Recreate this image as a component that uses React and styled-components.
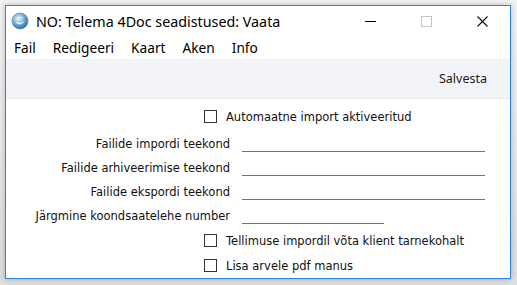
import styled, { createGlobalStyle } from 'styled-components'

const Global = createGlobalStyle`
  html, body { margin:0; padding:0; }
  body {
    background:#e9e9e9;
    width:517px;
    height:285px;
    overflow:hidden;
  }
`

const Shell = styled.div`
  padding:5px 6px 6px 5px;
  height:285px;
  box-sizing:border-box;
  background:linear-gradient(#f4f4f4,#dedede);
`
const Win = styled.div`
  height:100%;
  box-sizing:border-box;
  border:1px solid #2b87de;
  background:#fff;
  display:flex;
  flex-direction:column;
  box-shadow:0 0 6px rgba(0,0,0,0.25);
`
const TitleBar = styled.div`
  height:30px;
  display:flex;
  align-items:center;
  padding-left:5px;
  font-family:"Noto Sans","Open Sans",sans-serif;
  font-size:14.3px;
  color:#000;
`
const Title = styled.span`
  margin-left:7px;
  flex:1;
`
const WinBtn = styled.div`
  width:56px;
  height:29px;
  display:flex;
  align-items:center;
  justify-content:center;
`
const MenuBar = styled.div`
  height:23px;
  display:flex;
  align-items:center;
  padding-left:8px;
  gap:17px;
  font-family:"Noto Sans","Open Sans",sans-serif;
  font-size:13.7px;
  color:#000;
`
const MenuItem = styled.span``

const Toolbar = styled.div`
  height:39px;
  background:#f3f4f7;
  border-bottom:1px solid #e8e8ec;
  display:flex;
  align-items:center;
  justify-content:flex-end;
  padding-right:23px;
  font-family:"Noto Sans","Open Sans",sans-serif;
  font-size:12.5px;
  color:#1a1a1a;
`
const Form = styled.div`
  flex:1;
  padding-top:5px;
  display:flex;
  flex-direction:column;
  font-family:"DejaVu Sans",Verdana,sans-serif;
  font-size:11.5px;
  color:#111;
`
const CheckRow = styled.div`
  height:25px;
  display:flex;
  align-items:center;
  padding-left:198px;
  gap:9px;
  margin-bottom:${p => p.mb || 0}px;
`
const Box = styled.span`
  width:11px;
  height:11px;
  border:1px solid #333;
  background:#fff;
  display:inline-block;
`
const FieldRow = styled.div`
  height:24px;
  display:flex;
  align-items:center;
`
const Label = styled.div`
  width:224px;
  text-align:right;
`
const Line = styled.div`
  margin-left:12px;
  width:${p => p.w}px;
  height:15px;
  border-bottom:1px solid #707070;
`

const AppIcon = () => (
  <svg width="18" height="18" viewBox="0 0 18 18">
    <defs>
      <radialGradient id="g" cx="40%" cy="35%" r="65%">
        <stop offset="0" stopColor="#e8f4fc" />
        <stop offset="0.6" stopColor="#6aa9d6" />
        <stop offset="1" stopColor="#2c6ea6" />
      </radialGradient>
    </defs>
    <circle cx="9" cy="9" r="8" fill="url(#g)" stroke="#6d8aa3" strokeWidth="0.8" />
    <path d="M4.5 9.5 C6 13 11 13.5 13.5 9 C11.5 11 7.5 11.5 4.5 9.5Z" fill="#fff" opacity="0.9" />
    <path d="M6 6 C8 4.5 11 4.8 12.5 6.5 C10.5 5.8 8 6 6 6Z" fill="#fff" opacity="0.8" />
  </svg>
)

const fields = [
  { label: 'Failide impordi teekond', w: 243 },
  { label: 'Failide arhiveerimise teekond', w: 243 },
  { label: 'Failide ekspordi teekond', w: 243 },
  { label: 'Järgmine koondsaatelehe number', w: 142 },
]

const App = () => (
  <>
    <Global />
    <Shell>
      <Win>
        <TitleBar>
          <AppIcon />
          <Title>NO: Telema 4Doc seadistused: Vaata</Title>
          <WinBtn>
            <svg width="11" height="11" viewBox="0 0 11 11"><path d="M0 5.5H11" stroke="#000" strokeWidth="1" /></svg>
          </WinBtn>
          <WinBtn>
            <svg width="11" height="11" viewBox="0 0 11 11"><rect x="0.5" y="0.5" width="10" height="10" fill="none" stroke="#c4c4c4" /></svg>
          </WinBtn>
          <WinBtn>
            <svg width="11" height="11" viewBox="0 0 11 11"><path d="M0.5 0.5L10.5 10.5M10.5 0.5L0.5 10.5" stroke="#111" strokeWidth="1.1" /></svg>
          </WinBtn>
        </TitleBar>
        <MenuBar>
          <MenuItem>Fail</MenuItem>
          <MenuItem>Redigeeri</MenuItem>
          <MenuItem>Kaart</MenuItem>
          <MenuItem>Aken</MenuItem>
          <MenuItem>Info</MenuItem>
        </MenuBar>
        <Toolbar>Salvesta</Toolbar>
        <Form>
          <CheckRow mb={3}><Box />Automaatne import aktiveeritud</CheckRow>
          {fields.map(f => (
            <FieldRow key={f.label}>
              <Label>{f.label}</Label>
              <Line w={f.w} />
            </FieldRow>
          ))}
          <CheckRow><Box />Tellimuse impordil võta klient tarnekohalt</CheckRow>
          <CheckRow><Box />Lisa arvele pdf manus</CheckRow>
        </Form>
      </Win>
    </Shell>
  </>
)

export default App
